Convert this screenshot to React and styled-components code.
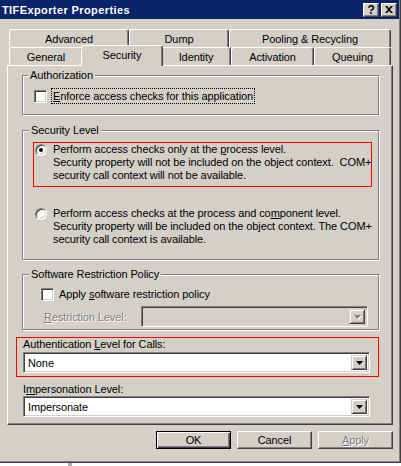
import React from 'react';
import styled, { createGlobalStyle, css } from 'styled-components';

const FACE = '#d4d0c8';
const SHADOW = '#808080';
const DARK = '#404040';

const GlobalStyle = createGlobalStyle`
  html, body {
    margin: 0;
    padding: 0;
    background: #fff;
  }
  body {
    font-family: "Liberation Sans", Arial, sans-serif;
    font-size: 11px;
    letter-spacing: -0.1px;
    color: #000;
  }
`;

const Window = styled.div`
  width: 401px;
  height: 463px;
  box-sizing: border-box;
  background: ${FACE};
  border-right: 1px solid ${DARK};
  border-bottom: 1px solid ${DARK};
  box-shadow: inset -1px -1px 0 ${SHADOW};
  display: flex;
  flex-direction: column;
`;

const TitleBar = styled.div`
  height: 19px;
  margin-right: 1px;
  padding: 0 2px;
  background: #0a246a;
  display: flex;
  align-items: center;
`;

const Title = styled.div`
  flex: 1;
  color: #fff;
  font-weight: bold;
  letter-spacing: 0.4px;
`;

const CaptionButton = styled.div`
  width: 16px;
  height: 14px;
  box-sizing: border-box;
  margin-left: 2px;
  background: ${FACE};
  border: 1px solid;
  border-color: #fff ${DARK} ${DARK} #fff;
  box-shadow: inset -1px -1px 0 ${SHADOW};
  display: flex;
  align-items: center;
  justify-content: center;
  font-weight: bold;
  font-size: 12px;
  line-height: 1;
`;

const Tabs = styled.div`
  margin: 10px 0 0 9px;
  display: flex;
  flex-direction: column;
`;

const TabRow = styled.div`
  display: flex;
  height: 18px;
  align-items: flex-end;
`;

const Tab = styled.div`
  box-sizing: border-box;
  width: ${p => p.$w}px;
  height: 18px;
  padding-top: 1px;
  background: ${FACE};
  border: 1px solid;
  border-bottom: none;
  border-color: #fff ${DARK} transparent #fff;
  border-radius: 3px 3px 0 0;
  box-shadow: inset -1px 0 0 ${SHADOW};
  display: flex;
  align-items: center;
  justify-content: center;
  white-space: nowrap;

  ${p => p.$active && css`
    width: ${p.$w + 4}px;
    height: 21px;
    margin: 0 -2px -1px;
    padding: 0 0 3px;
    position: relative;
    z-index: 1;
  `}
`;

const Panel = styled.div`
  margin-left: 7px;
  width: 386px;
  height: 360px;
  box-sizing: border-box;
  border: 1px solid;
  border-color: #fff ${DARK} ${DARK} #fff;
  box-shadow: inset -1px -1px 0 ${SHADOW};
  padding: 9px 0 0 8px;
  display: flex;
  flex-direction: column;
`;

const GroupBox = styled.div`
  box-sizing: border-box;
  width: 357px;
  height: ${p => p.$h}px;
  margin: 0 0 ${p => p.$mb || 0}px 6px;
  border: 1px solid ${SHADOW};
  box-shadow: inset 1px 1px 0 #fff, 1px 1px 0 #fff;
  display: flex;
  flex-direction: column;
`;

const GroupTitle = styled.div`
  width: fit-content;
  margin: -7px 0 0 ${p => p.$x || 5}px;
  padding: 0 2px;
  background: ${FACE};
  line-height: 13px;
  white-space: nowrap;
`;

const CheckRow = styled.div`
  display: flex;
  align-items: center;
  margin: ${p => p.$top}px 0 0 ${p => p.$left}px;
`;

const CheckBox = styled.div`
  width: 13px;
  height: 13px;
  box-sizing: border-box;
  flex: none;
  background: #fff;
  border: 1px solid;
  border-color: ${SHADOW} #fff #fff ${SHADOW};
  box-shadow: inset 1px 1px 0 ${DARK}, inset -1px -1px 0 ${FACE};
`;

const CheckLabel = styled.span`
  margin-left: ${p => p.$gap}px;
  line-height: 14px;
  white-space: nowrap;
  ${p => p.$focus && css`
    border: 1px dotted #000;
    padding: 0 1px;
  `}
`;

const Highlight = styled.div`
  box-sizing: border-box;
  width: ${p => p.$w}px;
  height: ${p => p.$h}px;
  margin: ${p => p.$top}px 0 0 ${p => p.$left || 0}px;
  border: 1px solid #ff0000;
  padding: ${p => p.$pad || '0'};
  display: flex;
  flex-direction: column;
`;

const RadioOption = styled.div`
  display: flex;
  align-items: flex-start;
  margin: ${p => p.$top || 0}px 0 0 ${p => p.$left || 0}px;
`;

const Radio = styled.div`
  width: 12px;
  height: 12px;
  box-sizing: border-box;
  flex: none;
  margin-top: 1px;
  border-radius: 50%;
  background: #fff;
  border: 1px solid;
  border-color: ${SHADOW} #fff #fff ${SHADOW};
  box-shadow: inset 1px 1px 0 ${DARK}, inset -1px -1px 0 ${FACE};
  display: flex;
  align-items: center;
  justify-content: center;

  &::after {
    content: '';
    display: ${p => (p.$checked ? 'block' : 'none')};
    width: 4px;
    height: 4px;
    border-radius: 50%;
    background: #000;
  }
`;

const RadioText = styled.div`
  margin-left: 6px;
  line-height: 13px;
  white-space: nowrap;
`;

const FieldRow = styled.div`
  display: flex;
  align-items: center;
  justify-content: space-between;
  margin-top: 5px;
  padding: 0 10px 0 21px;
`;

const DisabledText = styled.span`
  color: ${SHADOW};
  text-shadow: 1px 1px 0 #fff;
  white-space: nowrap;
`;

const FieldLabel = styled.div`
  line-height: 13px;
  white-space: nowrap;
  margin: ${p => p.$top || 0}px 0 0 ${p => p.$left || 0}px;
`;

const Combo = styled.div`
  box-sizing: border-box;
  width: ${p => p.$w}px;
  height: 21px;
  margin: ${p => p.$top || 0}px 0 0 ${p => p.$left || 0}px;
  padding: 2px;
  background: ${p => (p.$disabled ? FACE : '#fff')};
  border: 1px solid;
  border-color: ${SHADOW} #fff #fff ${SHADOW};
  box-shadow: inset 1px 1px 0 ${DARK}, inset -1px -1px 0 ${FACE};
  display: flex;
  align-items: stretch;
`;

const ComboText = styled.div`
  flex: 1;
  padding-left: 2px;
  display: flex;
  align-items: center;
`;

const DropButton = styled.div`
  width: 16px;
  box-sizing: border-box;
  background: ${FACE};
  border: 1px solid;
  border-color: ${FACE} ${DARK} ${DARK} ${FACE};
  box-shadow: inset 1px 1px 0 #fff, inset -1px -1px 0 ${SHADOW};
  display: flex;
  align-items: center;
  justify-content: center;
`;

const ButtonRow = styled.div`
  display: flex;
  gap: 6px;
  margin-top: 6px;
  padding-left: 156px;
`;

const Button = styled.div`
  width: 75px;
  height: 18px;
  box-sizing: border-box;
  background: ${FACE};
  border: 1px solid;
  border-color: #fff ${DARK} ${DARK} #fff;
  box-shadow: inset -1px -1px 0 ${SHADOW};
  display: flex;
  align-items: center;
  justify-content: center;

  ${p => p.$default && css`
    border-color: #000;
    box-shadow: inset 1px 1px 0 #fff, inset -1px -1px 0 ${DARK}, inset -2px -2px 0 ${SHADOW};
  `}

  ${p => p.$disabled && css`
    color: ${SHADOW};
    text-shadow: 1px 1px 0 #fff;
  `}
`;

const Desk = styled.div`
  height: 3px;
  background: #fff;
  display: flex;
`;

const DeskMark = styled.div`
  width: 4px;
  height: 3px;
  margin-left: 68px;
  background: #b0b0b0;
`;

const Arrow = ({ disabled }) => (
  <svg width="7" height="4" viewBox="0 0 7 4" style={{ overflow: 'visible' }}>
    {disabled && <polygon points="1,1 8,1 4.5,5" fill="#fff" />}
    <polygon points="0,0 7,0 3.5,4" fill={disabled ? SHADOW : '#000'} />
  </svg>
);

const CloseGlyph = () => (
  <svg width="8" height="7" viewBox="0 0 8 7">
    <path d="M0 0h2l2 2 2-2h2L5 3.5 8 7H6L4 5 2 7H0l3-3.5z" fill="#000" />
  </svg>
);

const topTabs = [
  ['Advanced', 120],
  ['Dump', 100],
  ['Pooling & Recycling', 162],
];

const bottomTabs = [
  ['General', 74],
  ['Security', 78, true],
  ['Identity', 70],
  ['Activation', 83],
  ['Queuing', 77],
];

export default function App() {
  return (
    <>
      <GlobalStyle />
      <Window>
        <TitleBar>
          <Title>TIFExporter Properties</Title>
          <CaptionButton>?</CaptionButton>
          <CaptionButton>
            <CloseGlyph />
          </CaptionButton>
        </TitleBar>

        <Tabs>
          <TabRow>
            {topTabs.map(([label, w]) => (
              <Tab key={label} $w={w}>{label}</Tab>
            ))}
          </TabRow>
          <TabRow>
            {bottomTabs.map(([label, w, active]) => (
              <Tab key={label} $w={w} $active={active}>{label}</Tab>
            ))}
          </TabRow>
        </Tabs>

        <Panel>
          <GroupBox $h={40} $mb={15}>
            <GroupTitle>Authorization</GroupTitle>
            <CheckRow $top={6} $left={11}>
              <CheckBox />
              <CheckLabel $gap={4} $focus>
                <u>E</u>nforce access checks for this application
              </CheckLabel>
            </CheckRow>
          </GroupBox>

          <GroupBox $h={130} $mb={14}>
            <GroupTitle $x={6}>Security Level</GroupTitle>
            <Highlight $w={339} $h={45} $top={5} $left={10} $pad="0 0 0 1px">
              <RadioOption>
                <Radio $checked />
                <RadioText>
                  Perform access checks only at the <u>p</u>rocess level.<br />
                  Security property will not be included on the object context.&nbsp; COM+<br />
                  security call context will not be available.
                </RadioText>
              </RadioOption>
            </Highlight>
            <RadioOption $top={20} $left={12}>
              <Radio />
              <RadioText>
                Perform access checks at the process and co<u>m</u>ponent level.<br />
                Security property will be included on the object context. The COM+<br />
                security call context is available.
              </RadioText>
            </RadioOption>
          </GroupBox>

          <GroupBox $h={56}>
            <GroupTitle $x={6}>Software Restriction Policy</GroupTitle>
            <CheckRow $top={6} $left={18}>
              <CheckBox />
              <CheckLabel $gap={5}>
                Apply <u>s</u>oftware restriction policy
              </CheckLabel>
            </CheckRow>
            <FieldRow>
              <DisabledText>
                <u>R</u>estriction Level:
              </DisabledText>
              <Combo $w={227} $disabled>
                <ComboText />
                <DropButton>
                  <Arrow disabled />
                </DropButton>
              </Combo>
            </FieldRow>
          </GroupBox>

          <Highlight $w={363} $h={40} $top={7} $pad="0 0 0 6px">
            <FieldLabel>
              Authentication <u>L</u>evel for Calls:
            </FieldLabel>
            <Combo $w={347} $top={1}>
              <ComboText>None</ComboText>
              <DropButton>
                <Arrow />
              </DropButton>
            </Combo>
          </Highlight>

          <FieldLabel $top={6} $left={7}>
            I<u>m</u>personation Level:
          </FieldLabel>
          <Combo $w={347} $top={0} $left={7}>
            <ComboText>Impersonate</ComboText>
            <DropButton>
              <Arrow />
            </DropButton>
          </Combo>
        </Panel>

        <ButtonRow>
          <Button $default>OK</Button>
          <Button>Cancel</Button>
          <Button $disabled>
            <u>A</u>pply
          </Button>
        </ButtonRow>
      </Window>
      <Desk>
        <DeskMark />
      </Desk>
    </>
  );
}
